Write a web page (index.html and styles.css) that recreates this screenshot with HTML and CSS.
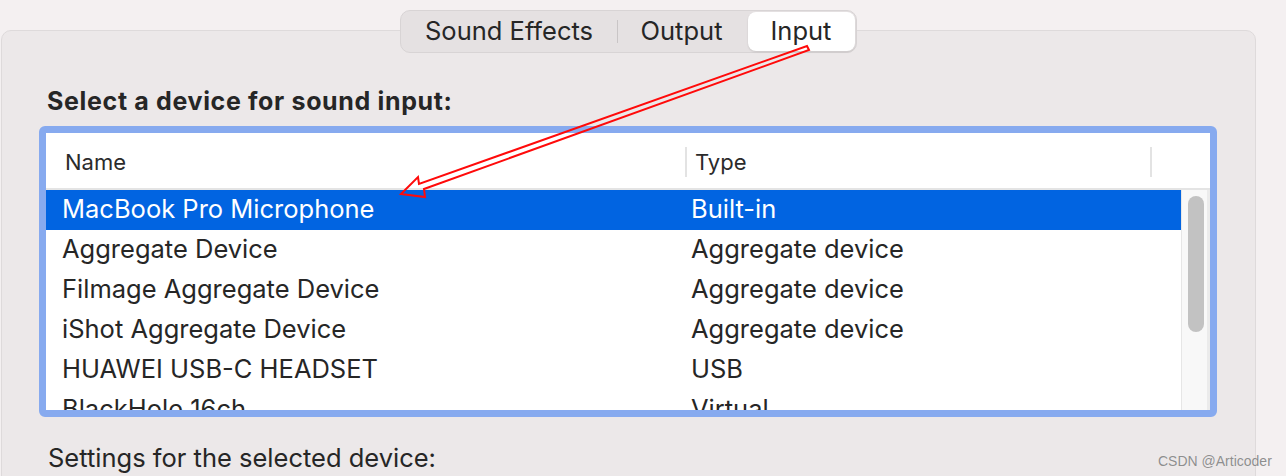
FILE: index.html
```html
<!DOCTYPE html>
<html>
<head>
<meta charset="utf-8">
<link rel="stylesheet" href="styles.css">
</head>
<body>
<div class="page">
  <div class="top">
    <div class="tabs">
      <div class="seg seg-effects">Sound Effects</div>
      <div class="sep"></div>
      <div class="seg seg-output">Output</div>
      <div class="seg seg-input active">Input</div>
    </div>
  </div>
  <div class="panel">
    <h2 class="heading">Select a device for sound input:</h2>
    <div class="table">
      <div class="thead">
        <div class="th th-name">Name</div>
        <div class="th th-type">Type</div>
        <div class="th th-end"></div>
      </div>
      <div class="tbody">
        <div class="rows">
          <div class="row selected"><span class="c-name">MacBook Pro Microphone</span><span class="c-type">Built-in</span></div>
          <div class="row"><span class="c-name">Aggregate Device</span><span class="c-type">Aggregate device</span></div>
          <div class="row"><span class="c-name">Filmage Aggregate Device</span><span class="c-type">Aggregate device</span></div>
          <div class="row"><span class="c-name">iShot Aggregate Device</span><span class="c-type">Aggregate device</span></div>
          <div class="row"><span class="c-name">HUAWEI USB-C HEADSET</span><span class="c-type">USB</span></div>
          <div class="row"><span class="c-name">BlackHole 16ch</span><span class="c-type">Virtual</span></div>
        </div>
        <div class="scrollbar"><div class="thumb"></div></div>
      </div>
    </div>
    <p class="settings">Settings for the selected device:</p>
  </div>
  <svg class="arrow" width="1286" height="476" viewBox="0 0 1286 476">
    <polygon points="401,194 418,177 419,184 807,46 809,50 424,189 425,197" fill="none" stroke="#ff0a0a" stroke-width="2" stroke-linejoin="miter"/>
  </svg>
  <div class="watermark">CSDN @Articoder</div>
</div>
</body>
</html>
```
FILE: styles.css
```css
html, body {
  margin: 0;
  padding: 0;
}
body {
  background: #f4f0f1;
  font-family: Inter, "Noto Sans", "Liberation Sans", sans-serif;
  color: #262626;
  width: 1286px;
  height: 476px;
  overflow: hidden;
}
.page {
  position: relative;
  padding-top: 10px;
  height: 466px;
}
.top {
  width: 1256px;
  display: flex;
  justify-content: center;
  position: relative;
  z-index: 2;
}
.tabs {
  display: flex;
  align-items: center;
  box-sizing: border-box;
  height: 43px;
  padding: 1px;
  background: #e5e1e2;
  border: 1px solid #d8d4d5;
  border-radius: 10px;
}
.seg {
  height: 39px;
  box-sizing: border-box;
  padding-bottom: 2px;
  display: flex;
  align-items: center;
  justify-content: center;
  font-size: 25.5px;
  color: #262626;
}
.seg-effects { width: 215px; }
.sep {
  width: 1px;
  height: 23px;
  background: #c9c5c6;
}
.seg-output { width: 128px; margin-right: 2px; }
.seg-input { width: 107px; }
.seg.active {
  background: #ffffff;
  border-radius: 8px;
  box-shadow: 0 1px 2px rgba(0,0,0,0.12);
}
.panel {
  position: relative;
  z-index: 1;
  margin-top: -23px;
  margin-left: 1px;
  width: 1255px;
  box-sizing: border-box;
  height: 460px;
  background: #ece8e9;
  border: 1px solid #dedadb;
  border-radius: 10px;
  padding: 55px 0 0 37px;
}
.heading {
  margin: 0;
  font-size: 25px;
  line-height: 30px;
  font-weight: 700;
  letter-spacing: 0.65px;
  color: #262626;
  padding-left: 8px;
}
.table {
  margin-top: 10px;
  width: 1178px;
  height: 291px;
  box-sizing: border-box;
  border: 7px solid #87aaef;
  border-radius: 6px;
  background: #ffffff;
  overflow: hidden;
  display: flex;
  flex-direction: column;
}
.thead {
  height: 57px;
  box-sizing: border-box;
  padding-top: 2px;
  flex: none;
  display: grid;
  grid-template-columns: 639px 465px 1fr;
  align-items: center;
  border-bottom: 2px solid #e4e4e4;
}
.th {
  font-size: 22px;
  color: #2b2b2b;
  height: 30px;
  line-height: 30px;
  box-sizing: border-box;
}
.th-name { padding-left: 19px; }
.th-type {
  border-left: 2px solid #e3e3e3;
  padding-left: 8px;
}
.th-end {
  border-left: 2px solid #e3e3e3;
}
.tbody {
  flex: 1;
  display: flex;
  min-height: 0;
}
.rows {
  flex: 1;
  overflow: hidden;
}
.row {
  height: 40px;
  box-sizing: border-box;
  padding-bottom: 3px;
  display: grid;
  grid-template-columns: 645px 1fr;
  align-items: center;
  font-size: 25.5px;
  color: #262626;
}
.row .c-name { padding-left: 16px; }
.row.selected {
  background: #0164e1;
  color: #ffffff;
}
.scrollbar {
  width: 29px;
  flex: none;
  background: #f8f8f8;
  border-left: 1px solid #e6e6e6;
  border-right: 3px solid #ebebeb;
  box-sizing: border-box;
  padding: 6px 0 0 6px;
}
.thumb {
  width: 16px;
  height: 136px;
  border-radius: 8px;
  background: #c2c2c2;
}
.settings {
  margin: 0;
  padding-left: 9px;
  margin-top: 26px;
  font-size: 25.5px;
  line-height: 30px;
  color: #262626;
}
.arrow {
  position: absolute;
  left: 0;
  top: 0;
  z-index: 5;
  pointer-events: none;
}
.watermark {
  position: absolute;
  z-index: 6;
  left: 1158px;
  top: 452px;
  font-family: "Liberation Sans", Arial, sans-serif;
  font-size: 14px;
  line-height: 18px;
  color: #8e8e8e;
  text-shadow: 0 0 1px rgba(255,255,255,0.6);
}
```
